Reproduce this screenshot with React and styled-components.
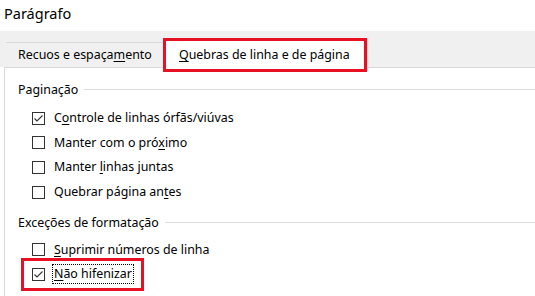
import React from 'react'
import styled, { createGlobalStyle } from 'styled-components'

const GlobalStyle = createGlobalStyle`
  html, body {
    margin: 0;
    background: #fff;
  }
  body {
    font-family: "Segoe UI", "Noto Sans", "Liberation Sans", sans-serif;
    color: #000;
  }
`

const Dialog = styled.div`
  width: 535px;
  height: 296px;
  overflow: hidden;
  display: flex;
  flex-direction: column;
`

const Title = styled.div`
  height: 31px;
  padding-left: 4px;
  font-size: 14.5px;
  line-height: 26px;
`

const TabStrip = styled.div`
  height: 36px;
  background: #f0f0f0;
  display: flex;
  align-items: flex-end;
  padding-left: 6px;
  position: relative;
  z-index: 1;
`

const Tab = styled.div`
  height: 25px;
  flex-shrink: 0;
  white-space: nowrap;
  border-top: 1px solid #d9d9d9;
  box-sizing: border-box;
  padding: 0 0 0 12px;
  font-size: 12.4px;
  line-height: 24px;
  width: 157px;
`

const ActiveTab = styled.div`
  height: 34px;
  flex-shrink: 0;
  white-space: nowrap;
  margin-bottom: -5px;
  width: 204px;
  box-sizing: border-box;
  background: #fff;
  border: 3px solid #e81123;
  box-shadow: 2px 0 0 -1px #d9d9d9;
  padding-left: 13px;
  font-size: 12.4px;
  line-height: 28px;
`

const Panel = styled.div`
  flex: 1;
  margin-left: 4px;
  background: #fff;
  border-top: 1px solid #d9d9d9;
  border-left: 1px solid #d9d9d9;
  padding: 11px 0 0 13px;
`

const GroupHeading = styled.div`
  display: flex;
  align-items: center;
  font-size: 12.4px;
  height: 20px;
  margin-bottom: ${p => p.$gap || 0}px;

  &::after {
    content: '';
    flex: 1;
    border-top: 1px solid #dcdcdc;
    margin-left: 6px;
  }
`

const Group = styled.div`
  margin-bottom: ${p => p.$gap || 0}px;
`

const Row = styled.div`
  display: flex;
  align-items: center;
  height: 24.6px;
  padding-left: 14px;
  font-size: 12.4px;
`

const Box = styled.span`
  width: 13px;
  height: 13px;
  box-sizing: border-box;
  border: 1px solid #333;
  background: #fff;
  display: inline-flex;
  align-items: center;
  justify-content: center;
  margin-right: 7px;
  flex-shrink: 0;
`

const Label = styled.span`
  padding: 0 1px;
  line-height: 18px;
  border: 1px dotted ${p => (p.$focus ? '#000' : 'transparent')};
`

const Mark = styled.span`
  text-decoration: underline;
  text-underline-offset: 2px;
`

const Highlight = styled.div`
  display: flex;
  width: fit-content;
  align-items: center;
  border: 3px solid #e81123;
  height: 33px;
  box-sizing: border-box;
  margin: -4px 0 0 3px;
  padding: 0 7px 0 8px;
  font-size: 12.4px;
`

function Check() {
  return (
    <svg width="11" height="11" viewBox="0 0 11 11">
      <path d="M1.5 5.5 L4 8 L9.5 2.5" fill="none" stroke="#333" strokeWidth="1.1" />
    </svg>
  )
}

function CheckRow({ checked, children, focus }) {
  return (
    <Row>
      <Box>{checked && <Check />}</Box>
      <Label $focus={focus}>{children}</Label>
    </Row>
  )
}

export default function App() {
  return (
    <>
      <GlobalStyle />
      <Dialog>
        <Title>Parágrafo</Title>
        <TabStrip>
          <Tab>Recuos e espaça<Mark>m</Mark>ento</Tab>
          <ActiveTab><Mark>Q</Mark>uebras de linha e de página</ActiveTab>
        </TabStrip>
        <Panel>
          <GroupHeading $gap={7}>Paginação</GroupHeading>
          <Group $gap={8}>
            <CheckRow checked>C<Mark>o</Mark>ntrole de linhas órfãs/viúvas</CheckRow>
            <CheckRow>Manter com o pró<Mark>x</Mark>imo</CheckRow>
            <CheckRow>Manter <Mark>l</Mark>inhas juntas</CheckRow>
            <CheckRow>Quebrar página an<Mark>t</Mark>es</CheckRow>
          </Group>
          <GroupHeading $gap={5}>Exceções de formatação</GroupHeading>
          <CheckRow><Mark>S</Mark>uprimir números de linha</CheckRow>
          <Highlight>
            <Box><Check /></Box>
            <Label $focus><Mark>N</Mark>ão hifenizar</Label>
          </Highlight>
        </Panel>
      </Dialog>
    </>
  )
}
